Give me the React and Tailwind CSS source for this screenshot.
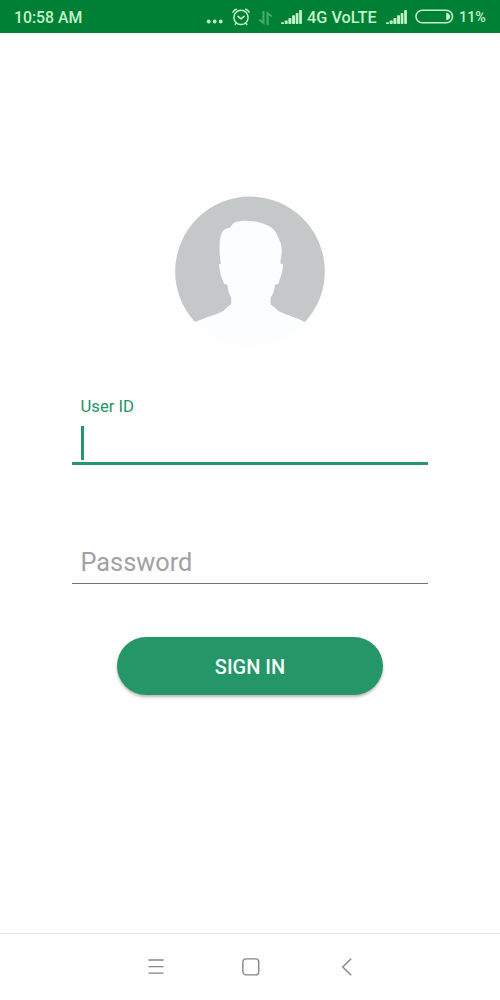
import { useState } from 'react';

const SignalIcon = ({ className = '' }) => (
  <svg className={`shrink-0 -translate-y-px ${className}`} width="22" height="16" viewBox="0 0 22 16" fill="currentColor">
    <rect x="0" y="13.2" width="3" height="1.8" rx="0.7" />
    <rect x="3.7" y="11.5" width="3" height="3.5" rx="0.7" />
    <rect x="7.4" y="9" width="3" height="6" rx="0.7" />
    <rect x="11.1" y="6.3" width="2.9" height="8.7" rx="0.7" />
    <rect x="14.7" y="4" width="2.7" height="11" rx="0.7" />
    <rect x="18.2" y="1" width="2.7" height="14" rx="0.7" />
  </svg>
);

const AlarmIcon = () => (
  <svg className="ml-[9px] shrink-0 -translate-y-px" width="18" height="18" viewBox="0 0 18 18" fill="none" stroke="currentColor" strokeWidth="1.5" strokeLinecap="round" strokeLinejoin="round">
    <circle cx="9" cy="9.4" r="7.1" />
    <path d="M6 8.3 L9 10.8 L12 8.3" />
    <path d="M0.9 4.2 Q1.8 2.2 4.3 1.3 M17.1 4.2 Q16.2 2.2 13.7 1.3" />
    <path d="M4.1 15.4 L3.2 16.5 M13.9 15.4 L14.8 16.5" />
  </svg>
);

const DataIcon = () => (
  <svg className="ml-[8px] shrink-0 opacity-35" width="15" height="16" viewBox="0 0 15 16" fill="currentColor">
    <path d="M4.3 1h2.2v14L0.5 10.2l1-1.2 2.8 1.6z" />
    <path d="M8.5 1l6 4.8-1 1.2-2.8-1.6V15H8.5z" />
  </svg>
);

const BatteryIcon = () => (
  <svg className="ml-[7px] shrink-0 -translate-y-px" width="39" height="15" viewBox="0 0 39 15" fill="none">
    <rect x="1" y="1.2" width="36.5" height="12.6" rx="6.3" stroke="currentColor" strokeWidth="1.6" />
    <path d="M31.2 3.4c2.6.8 4 2.3 4 4.1s-1.4 3.3-4 4.1z" fill="currentColor" />
  </svg>
);

const StatusBar = () => (
  <header className="flex h-[33px] shrink-0 items-center bg-[#008035] pl-[14px] pt-[2px] font-medium text-[#c2f3ca]">
    <span className="w-[192px] whitespace-nowrap text-[15.8px]">10:58 AM</span>
    <svg className="shrink-0 -translate-y-px" width="17" height="16" viewBox="0 0 17 16" fill="currentColor">
      <circle cx="2.7" cy="12.5" r="1.9" />
      <circle cx="8.7" cy="12.5" r="1.9" />
      <circle cx="14.7" cy="12.5" r="1.9" />
    </svg>
    <AlarmIcon />
    <DataIcon />
    <SignalIcon className="ml-[8px]" />
    <span className="ml-[4px] w-[79px] whitespace-nowrap pt-[2px] text-[16.3px]">4G VoLTE</span>
    <SignalIcon />
    <BatteryIcon />
    <span className="ml-[5px] whitespace-nowrap text-[14.3px]">11%</span>
  </header>
);

const Avatar = () => (
  <svg className="mx-auto block" width="150" height="152" viewBox="0 0 150 152">
    <circle cx="75" cy="75.5" r="75" fill="#fbfdff" />
    {/* backdrop with the head and shoulders cut out */}
    <path
      fill="#c4c8c9"
      d="M20 126.1 C30 121.5 41 119 48.3 115 C51 112 54 110 56.2 108.3 V101.5 C53.5 97.5 53 93 52.3 88.5 L49.3 88 C47.5 83 44.5 79 44.3 68.2 L46 67.5 C44.5 61 43.5 48 46 39 C47.5 34 50.5 32.5 55 31.7 C57 29.5 57 27 61 26 C69 23.7 82 24.5 91.7 29 C98 31.5 101.5 36.5 103.7 42.5 C106 46 107 52 106.7 56 C106.6 61 105.2 64 105.5 67.5 L108 68.2 C108 76 105.5 81 103.3 88 L100 88.8 C99.5 93.5 98.5 98 95.5 101.7 V108.3 C98 110 100.5 112.5 103.3 115 C112 119.5 122 121.5 130 126.1 A74.8 74.8 0 1 0 20 126.1 Z"
    />
  </svg>
);

const NavBar = () => (
  <nav className="flex h-[67px] shrink-0 items-center border-t border-[#ececec] pl-[148px] text-[#858585]">
    <svg width="16" height="18" viewBox="0 0 16 18" stroke="currentColor" strokeWidth="1.3">
      <path d="M0.5 2h15M0.5 8.7h15M0.5 15.1h15" />
    </svg>
    <svg className="ml-[78px]" width="18" height="18" viewBox="0 0 18 18" fill="none" stroke="currentColor" strokeWidth="1.4">
      <rect x="0.9" y="0.9" width="15.8" height="16" rx="3.2" />
    </svg>
    <svg className="ml-[81px]" width="12" height="18" viewBox="0 0 12 18" fill="none" stroke="currentColor" strokeWidth="1.4">
      <path d="M10.2 0.8 L1.7 9 L10.2 17.2" />
    </svg>
  </nav>
);

export default function App() {
  const [userId, setUserId] = useState('');
  const [password, setPassword] = useState('');

  return (
    <div className="flex h-[1000px] w-[500px] flex-col overflow-hidden bg-[#fefefe] font-['Roboto',sans-serif]">
      <StatusBar />

      <main className="flex-1 px-[72px] pt-[163px]">
        <Avatar />

        <form onSubmit={e => e.preventDefault()}>
          <div className="mt-[48px] h-[69px] border-b-[3px] border-[#269568]">
            <label htmlFor="userId" className="block pl-[8.5px] pt-px text-[16.7px] leading-5 text-[#269568]">User ID</label>
            <div className="mt-[8px] flex h-[35px] items-center pl-[8.5px]">
              {/* text cursor of the focused field */}
              <span className="h-[34px] w-[3px] shrink-0 bg-[#269568]" />
              <input
                id="userId"
                value={userId}
                onChange={e => setUserId(e.target.value)}
                className="h-full w-full bg-transparent text-[25px] caret-transparent outline-none"
              />
            </div>
          </div>

          <input
            type="password"
            value={password}
            placeholder="Password"
            onChange={e => setPassword(e.target.value)}
            className="mt-[77px] block h-[42px] w-full border-b border-[#707070] bg-transparent pl-[8.5px] text-[25.3px] outline-none placeholder:text-[#a3a1a3]"
          />

          <button
            type="submit"
            className="mx-auto mt-[53px] block h-[58px] w-[266px] rounded-full bg-[#249668] pt-[2px] text-[20px] font-medium text-[#f5fff9] shadow-[0_2px_3px_rgba(0,0,0,0.28)]"
          >
            SIGN IN
          </button>
        </form>
      </main>

      <NavBar />
    </div>
  );
}
